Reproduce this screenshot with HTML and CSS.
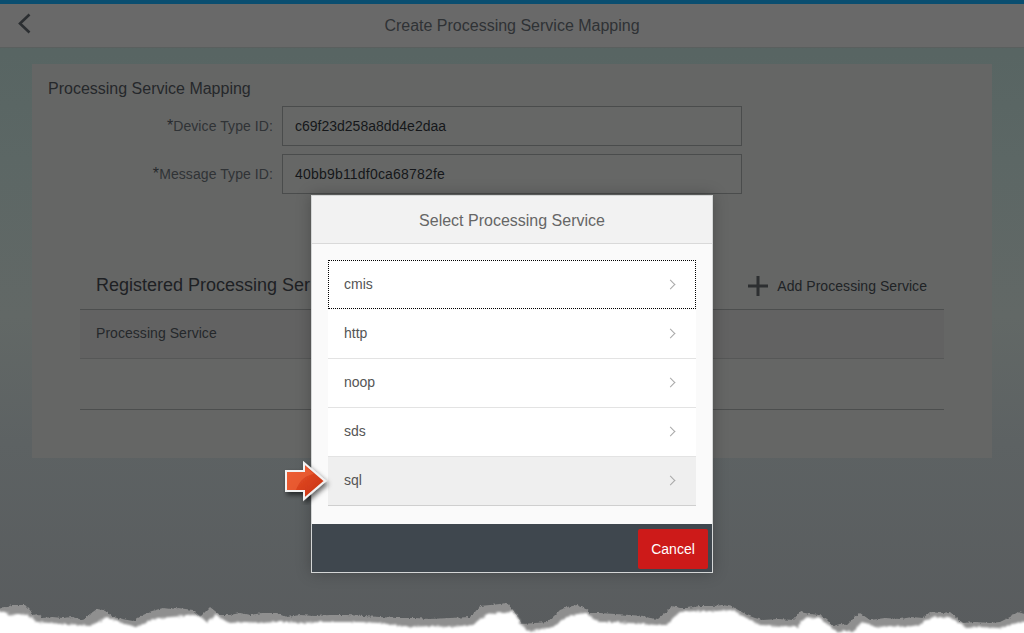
FILE: index.html
```html
<!DOCTYPE html>
<html lang="en">
<head>
  <meta charset="UTF-8">
  <title>Create Processing Service Mapping</title>
  <link rel="stylesheet" href="styles.css">
</head>
<body>
  <div class="page">
    <header class="topbar">
      <a class="back" href="#">
        <svg width="14" height="22" viewBox="0 0 14 22"><path d="M12.5 1.5 3 10.5 12.5 19.5" fill="none" stroke="#2b2e31" stroke-width="2.6"/></svg>
      </a>
      <h1>Create Processing Service Mapping</h1>
    </header>

    <main class="panel">
      <h2>Processing Service Mapping</h2>
      <div class="field">
        <label><span class="req">*</span>Device Type ID:</label>
        <div class="input">c69f23d258a8dd4e2daa</div>
      </div>
      <div class="field">
        <label><span class="req">*</span>Message Type ID:</label>
        <div class="input input-wide">40bb9b11df0ca68782fe</div>
      </div>

      <section class="registered">
        <div class="reg-head">
          <h3>Registered Processing Ser</h3>
          <a class="add" href="#">
            <svg width="20" height="20" viewBox="0 0 20 20"><path d="M0 10h20M10 0v20" stroke="#2d2f31" stroke-width="3"/></svg>
            Add Processing Service
          </a>
        </div>
        <div class="reg-col">Processing Service</div>
        <div class="reg-row"></div>
      </section>
    </main>

    <div class="modal">
      <div class="modal-title">Select Processing Service</div>
      <ul class="services">
        <li class="focused">cmis<span class="chev"></span></li>
        <li>http<span class="chev"></span></li>
        <li>noop<span class="chev"></span></li>
        <li>sds<span class="chev"></span></li>
        <li class="hover">sql<span class="chev"></span></li>
      </ul>
      <div class="modal-foot">
        <button type="button">Cancel</button>
      </div>
    </div>

    <svg class="arrow" width="50" height="44" viewBox="0 0 50 44">
      <defs>
        <linearGradient id="arrowFill" x1="0" y1="0" x2="1" y2="1">
          <stop offset="0" stop-color="#ee5a30"/>
          <stop offset="1" stop-color="#c52c0e"/>
        </linearGradient>
        <filter id="arrowShadow" x="-30%" y="-30%" width="170%" height="170%">
          <feDropShadow dx="2" dy="3" stdDeviation="2.5" flood-color="#000" flood-opacity="0.6"/>
        </filter>
      </defs>
      <path d="M3 10H21V2L42 20 21 38V30H3Z" fill="url(#arrowFill)" stroke="#f2f2f2" stroke-width="2" filter="url(#arrowShadow)"/>
      <path d="M4 11H22V5L31 13C24 14 17 18 13 29H4Z" fill="#f0683c" opacity="0.55"/>
    </svg>

    <svg class="torn" width="1024" height="633" viewBox="0 0 1024 633">
      <defs>
        <filter id="rough" x="-2%" y="-30%" width="104%" height="160%">
          <feTurbulence type="fractalNoise" baseFrequency="0.35" numOctaves="2" seed="4"/>
          <feDisplacementMap in="SourceGraphic" scale="3.5" xChannelSelector="R" yChannelSelector="G"/>
        </filter>
        <filter id="roughSoft" x="-2%" y="-30%" width="104%" height="160%">
          <feTurbulence type="fractalNoise" baseFrequency="0.35" numOctaves="2" seed="4"/>
          <feDisplacementMap in="SourceGraphic" scale="3.5" xChannelSelector="R" yChannelSelector="G"/>
          <feGaussianBlur stdDeviation="0.8"/>
        </filter>
      </defs>
      <path class="torn-shadow" filter="url(#rough)" d="M-10 608 7 607 12 605 18 605 25 605 30 610 33 615 38 614 43 618 52 617 63 618 72 617 83 620 90 614 97 609 103 610 107 612 113 617 122 619 133 621 138 618 143 615 152 611 163 608 171 609 178 608 193 610 200 617 210 607 220 615 230 615 240 613 250 615 262 613 277 613 287 617 300 615 315 616 330 615 347 615 363 616 380 617 397 618 415 618 430 619 450 618 470 617 475 612 480 606 490 605 500 604 507 603 513 610 518 618 522 624 535 623 547 622 554 616 560 610 568 607 577 605 584 608 590 613 600 613 615 614 630 615 643 616 650 618 658 619 665 613 672 606 680 608 687 608 700 606 712 606 723 605 733 607 740 611 747 615 755 618 763 620 778 619 793 620 800 612 810 614 820 615 827 620 833 626 840 624 847 625 854 618 860 613 870 620 885 618 900 619 912 617 923 618 930 612 940 613 950 612 957 618 963 623 975 622 990 623 1000 622 1010 617 1018 612 1034 617V650H-10Z"/>
      <path class="torn-paper" filter="url(#roughSoft)" d="M-10 610 5 612 10 615 18 614 27 615 32 618 37 622 50 623 65 624 78 625 90 626 98 622 107 617 115 620 125 624 137 627 147 622 157 618 170 617 185 616 197 615 202 618 207 622 212 618 217 615 224 620 230 623 245 622 262 623 275 622 287 622 300 623 320 622 340 622 360 622 380 623 395 625 410 627 430 626 450 627 473 625 480 619 487 614 500 613 513 612 517 617 520 623 525 628 530 632 541 629 553 627 560 621 567 617 577 614 587 613 593 618 600 622 615 622 630 623 645 624 657 625 667 625 673 618 680 612 695 611 715 611 733 610 745 617 760 625 778 626 797 627 802 621 807 617 814 618 820 618 828 625 837 632 845 631 853 632 858 626 862 622 870 625 877 627 890 626 905 627 920 625 927 620 933 617 942 618 950 617 958 622 967 628 980 627 1000 628 1012 624 1034 620V650H-10Z"/>
    </svg>
  </div>
</body>
</html>
```

FILE: styles.css
```css
* {
  box-sizing: border-box;
}
body {
  margin: 0;
  font-family: "Liberation Sans", Arial, sans-serif;
  background-color: #fff;
}
.page {
  position: relative;
  width: 1024px;
  height: 633px;
  overflow: hidden;
  background: linear-gradient(180deg, #566462 0%, #5c6765 25%, #626866 50%, #5d6263 70%, #595c5e 100%);
}

/* top bar */
.topbar {
  display: flex;
  align-items: center;
  justify-content: center;
  position: relative;
  height: 48px;
  background-color: #696969;
  border-top: 4px solid #0a4e70;
  border-bottom: 1px solid #5a5f5e;
}
.topbar h1 {
  margin: 0;
  font-size: 16px;
  font-weight: normal;
  color: #2f3235;
}
.back {
  position: absolute;
  left: 17px;
  top: 9px;
  display: flex;
}

/* form panel */
.panel {
  height: 394px;
  margin: 16px 32px 0;
  padding: 16px 48px 0 16px;
  background-color: #656665;
}
.panel h2 {
  margin: 0 0 8px;
  font-size: 16px;
  line-height: 18px;
  font-weight: normal;
  color: #25282b;
}
.field {
  display: flex;
  align-items: center;
  gap: 9px;
  margin-bottom: 8px;
}
.field label {
  width: 225px;
  text-align: right;
  font-size: 14px;
  letter-spacing: 0.08px;
  color: #303336;
}
.req {
  font-size: 16px;
  line-height: 0;
  color: #26292c;
}
.input {
  width: 460px;
  height: 40px;
  padding-left: 12px;
  line-height: 38px;
  font-size: 14px;
  color: #15171a;
  background-color: #666766;
  border: 1px solid #4a4c4c;
}
.input-wide {
  letter-spacing: 0.2px;
}

/* registered services */
.registered {
  width: 864px;
  margin: 67px 0 0 32px;
}
.reg-head {
  display: flex;
  justify-content: space-between;
  align-items: center;
  height: 49px;
  padding: 0 17px 0 16px;
  border-bottom: 1px solid #4c4e4e;
}
.reg-head h3 {
  margin: 0;
  white-space: nowrap;
  font-size: 18px;
  font-weight: normal;
  color: #1e2124;
}
.add {
  display: flex;
  align-items: center;
  gap: 9px;
  padding-top: 2px;
  font-size: 14px;
  letter-spacing: 0.05px;
  color: #202326;
  text-decoration: none;
}
.reg-col {
  height: 49px;
  padding-left: 16px;
  line-height: 47px;
  font-size: 14px;
  letter-spacing: 0.05px;
  color: #25282b;
  background-color: #626262;
  border-bottom: 1px solid #565757;
}
.reg-row {
  height: 51px;
  border-bottom: 1px solid #4c4e4e;
}

/* modal */
.modal {
  position: absolute;
  left: 311px;
  top: 195px;
  width: 402px;
  height: 378px;
  display: flex;
  flex-direction: column;
  background-color: #fafafa;
  border: 1px solid #d4d6d6;
  box-shadow: 0 0 14px rgba(0, 0, 0, 0.25);
}
.modal-title {
  height: 48px;
  flex: none;
  text-align: center;
  line-height: 49px;
  font-size: 16px;
  color: #666;
  background-color: #f2f2f2;
  border-bottom: 1px solid #d9d9d9;
}
.services {
  flex: 1;
  list-style: none;
  margin: 0;
  padding: 16px 16px 0;
}
.services li {
  display: flex;
  justify-content: space-between;
  align-items: center;
  height: 49px;
  padding: 0 21px 2px 16px;
  font-size: 14px;
  color: #555;
  background-color: #fff;
  border-bottom: 1px solid #e3e3e3;
}
.services li.focused {
  margin-bottom: 1px;
  padding-bottom: 0;
  outline: 1px dotted #000;
  outline-offset: -1px;
  border-bottom-color: transparent;
}
.services li.hover {
  background-color: #efefef;
  border-bottom-color: #cfcfcf;
}
.chev {
  width: 7px;
  height: 7px;
  margin-right: 1px;
  border-top: 1px solid #a9a9a9;
  border-right: 1px solid #a9a9a9;
  transform: rotate(45deg);
}
.modal-foot {
  flex: none;
  display: flex;
  justify-content: flex-end;
  align-items: center;
  height: 48px;
  padding: 2px 4px 0 0;
  background-color: #3f474e;
}
.modal-foot button {
  width: 70px;
  height: 40px;
  font-family: inherit;
  font-size: 14px;
  color: #fff;
  background-color: #cd1a19;
  border: none;
  border-radius: 2px;
  cursor: pointer;
}

/* callout arrow and torn edge sit on top of everything */
.arrow {
  position: absolute;
  left: 283px;
  top: 461px;
}
.torn {
  position: absolute;
  left: 0;
  top: 0;
  pointer-events: none;
}
.torn-shadow {
  fill: #8f8f8f;
}
.torn-paper {
  fill: #fff;
}
```
